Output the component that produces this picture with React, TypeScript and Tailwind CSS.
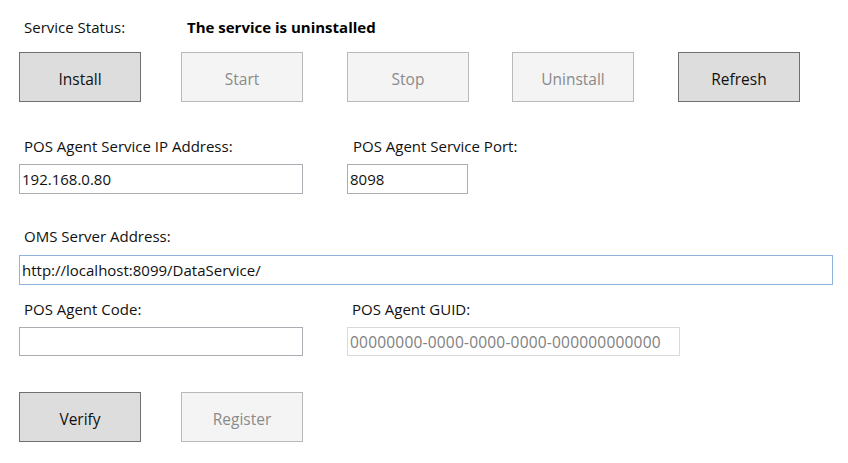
import { FC } from 'react';

interface ButtonProps {
  label: string;
  disabled?: boolean;
  className?: string;
}

const WinButton: FC<ButtonProps> = ({ label, disabled = false, className = '' }) => (
  <button
    type="button"
    disabled={disabled}
    className={
      'flex h-[50px] w-[122px] items-center justify-center border pt-[3px] text-[15.5px] ' +
      (disabled
        ? 'border-[#b9b9b9] bg-[#f4f4f4] text-[#8a8a8a] '
        : 'border-[#707070] bg-[#dddddd] text-[#111111] ') +
      className
    }
  >
    {label}
  </button>
);

export default function App() {
  return (
    <div className="h-[463px] w-[848px] overflow-hidden bg-white pl-[19px] pt-[17px] font-['Open_Sans',sans-serif] text-[15px] leading-5 text-[#111111]">
      {/* service status */}
      <div className="flex h-5 items-center">
        <span className="ml-[5px] w-[163px]">Service Status:</span>
        <span className="font-bold text-black">The service is uninstalled</span>
      </div>

      <div className="mt-[15px] flex">
        <WinButton label="Install" />
        <WinButton label="Start" disabled className="ml-[40px]" />
        <WinButton label="Stop" disabled className="ml-[44px]" />
        <WinButton label="Uninstall" disabled className="ml-[43px]" />
        <WinButton label="Refresh" className="ml-[44px]" />
      </div>

      {/* ip / port */}
      <div className="mt-[34px] flex h-5 items-center">
        <span className="ml-[5px] w-[329px]">POS Agent Service IP Address:</span>
        <span>POS Agent Service Port:</span>
      </div>
      <div className="mt-[8px] flex">
        <input
          readOnly
          defaultValue="192.168.0.80"
          className="h-[30px] w-[284px] border border-[#abadb3] px-[2px] outline-none"
        />
        <input
          readOnly
          defaultValue="8098"
          className="ml-[44px] h-[30px] w-[121px] border border-[#abadb3] px-[2px] outline-none"
        />
      </div>

      {/* oms server */}
      <div className="mt-[32px] flex h-5 items-center">
        <span className="ml-[5px]">OMS Server Address:</span>
      </div>
      <input
        readOnly
        defaultValue="http://localhost:8099/DataService/"
        className="mt-[9px] block h-[30px] w-[814px] border border-[#8fb3dd] px-[2px] outline-none"
      />

      {/* code / guid */}
      <div className="mt-[14px] flex h-5 items-center">
        <span className="ml-[5px] w-[328px]">POS Agent Code:</span>
        <span>POS Agent GUID:</span>
      </div>
      <div className="mt-[8px] flex">
        <input
          readOnly
          defaultValue=""
          className="h-[29px] w-[284px] border border-[#abadb3] px-[2px] outline-none"
        />
        <input
          readOnly
          disabled
          defaultValue="00000000-0000-0000-0000-000000000000"
          className="ml-[44px] h-[29px] w-[333px] border border-[#d9d9d9] bg-white px-[2px] text-[15.5px] tracking-[0.2px] text-[#808080] outline-none"
        />
      </div>

      <div className="mt-[36px] flex">
        <WinButton label="Verify" />
        <WinButton label="Register" disabled className="ml-[40px]" />
      </div>
    </div>
  );
}
